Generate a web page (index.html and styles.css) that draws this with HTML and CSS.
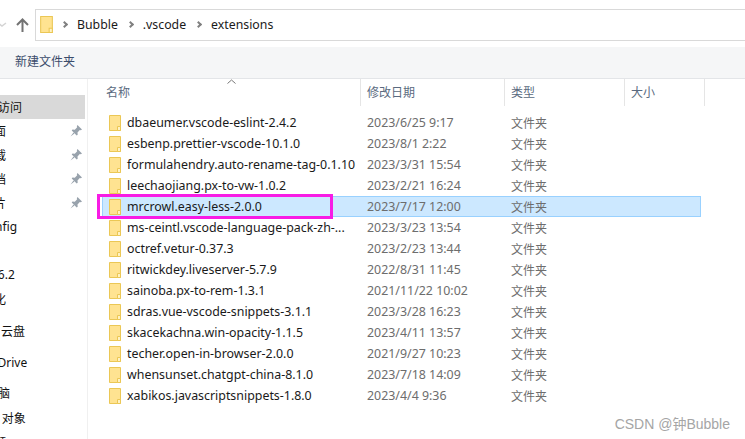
FILE: index.html
```html
<!DOCTYPE html>
<html>
<head>
  <meta charset="utf-8">
  <title>extensions</title>
  <link rel="stylesheet" href="styles.css">
</head>

<body>
  <svg class="svg-defs" width="0" height="0">
    <symbol id="folder" viewBox="0 0 12 16">
      <path d="M.5.5h11v15H.5z" fill="#ffe391" stroke="#ebc755"/>
      <path d="M8.5 15.5v-4h3v4z" fill="#fff2c4" stroke="#ebc755"/>
    </symbol>
    <symbol id="pin" viewBox="0 0 12 12">
      <path d="M7.5 0 12 4.500 10.800 5.300 9.800 5 7.500 7.500 7.700 9.700 6.700 10.500 1.700 5.500 2.500 4.500 4.800 4.700 7.200 2.300 6.800 1.200z" fill="#98a2ac"/>
      <path d="M3.500 7.500.5 11.500 4.500 8.500z" fill="#98a2ac"/>
    </symbol>
  </svg>

  <!-- address bar -->
  <div class="addr-row">
    <div class="nav-btns">
      <svg class="chev-down" width="10" height="6" viewBox="0 0 10 6"><path d="M1 1l4 3 4-3" fill="none" stroke="#d4d4d4" stroke-width="1.500"/></svg>
      <svg class="up-arrow" width="13" height="14" viewBox="0 0 13 14"><path d="M6.500 14V2M1 7l5.500-5.500L12 7" fill="none" stroke="#737373" stroke-width="2"/></svg>
    </div>
    <div class="addr-box">
      <svg class="addr-folder"><use href="#folder"/></svg>
      <span class="crumb-sep"></span><span class="crumb">Bubble</span>
      <span class="crumb-sep"></span><span class="crumb">.vscode</span>
      <span class="crumb-sep"></span><span class="crumb">extensions</span>
    </div>
  </div>

  <div class="toolbar">新建文件夹</div>

  <div class="main">
    <div class="sidebar">
      <div class="nav-item selected"><span class="nav-label clip-top">访问</span></div>
      <div class="nav-item"><span class="nav-label clip-a">桌面</span><svg class="pin"><use href="#pin"/></svg></div>
      <div class="nav-item"><span class="nav-label clip-a">下载</span><svg class="pin"><use href="#pin"/></svg></div>
      <div class="nav-item"><span class="nav-label clip-a">文档</span><svg class="pin"><use href="#pin"/></svg></div>
      <div class="nav-item"><span class="nav-label clip-a">图片</span><svg class="pin"><use href="#pin"/></svg></div>
      <div class="nav-item"><span class="nav-label clip-a">config</span></div>
      <div class="nav-item"></div>
      <div class="nav-item"><span class="nav-label clip-c">16.2</span></div>
      <div class="nav-item"><span class="nav-label clip-a">优化</span></div>
      <div class="nav-item group-start"><span class="nav-label cloud">云盘</span></div>
      <div class="nav-item group-start"><span class="nav-label clip-d">OneDrive</span></div>
      <div class="nav-item gap-small"><span class="nav-label clip-f">电脑</span></div>
      <div class="nav-item gap-tiny"><span class="nav-label clip-e">3D 对象</span></div>
      <div class="nav-item"><span class="nav-label clip-a">视频</span></div>
    </div>

    <div class="content">
      <div class="sort-caret">
        <svg width="9" height="5" viewBox="0 0 9 5"><path d="M.5 4.500l4-3.500 4 3.500" fill="none" stroke="#777" /></svg>
      </div>
      <div class="col-header">
        <div class="col col-name">名称</div>
        <div class="col col-date">修改日期</div>
        <div class="col col-type">类型</div>
        <div class="col col-size">大小</div>
      </div>

      <div class="file-list">
        <div class="file-row"><div class="col-name"><svg class="folder"><use href="#folder"/></svg>dbaeumer.vscode-eslint-2.4.2</div><div class="col-date">2023/6/25 9:17</div><div class="col-type">文件夹</div></div>
        <div class="file-row"><div class="col-name"><svg class="folder"><use href="#folder"/></svg>esbenp.prettier-vscode-10.1.0</div><div class="col-date">2023/8/1 2:22</div><div class="col-type">文件夹</div></div>
        <div class="file-row"><div class="col-name"><svg class="folder"><use href="#folder"/></svg>formulahendry.auto-rename-tag-0.1.10</div><div class="col-date">2023/3/31 15:54</div><div class="col-type">文件夹</div></div>
        <div class="file-row"><div class="col-name"><svg class="folder"><use href="#folder"/></svg>leechaojiang.px-to-vw-1.0.2</div><div class="col-date">2023/2/21 16:24</div><div class="col-type">文件夹</div></div>
        <div class="file-row selected"><div class="col-name"><svg class="folder"><use href="#folder"/></svg>mrcrowl.easy-less-2.0.0</div><div class="col-date">2023/7/17 12:00</div><div class="col-type">文件夹</div><div class="highlight-box"></div></div>
        <div class="file-row"><div class="col-name"><svg class="folder"><use href="#folder"/></svg>ms-ceintl.vscode-language-pack-zh-...</div><div class="col-date">2023/3/23 13:54</div><div class="col-type">文件夹</div></div>
        <div class="file-row"><div class="col-name"><svg class="folder"><use href="#folder"/></svg>octref.vetur-0.37.3</div><div class="col-date">2023/2/23 13:44</div><div class="col-type">文件夹</div></div>
        <div class="file-row"><div class="col-name"><svg class="folder"><use href="#folder"/></svg>ritwickdey.liveserver-5.7.9</div><div class="col-date">2022/8/31 11:45</div><div class="col-type">文件夹</div></div>
        <div class="file-row"><div class="col-name"><svg class="folder"><use href="#folder"/></svg>sainoba.px-to-rem-1.3.1</div><div class="col-date">2021/11/22 10:02</div><div class="col-type">文件夹</div></div>
        <div class="file-row"><div class="col-name"><svg class="folder"><use href="#folder"/></svg>sdras.vue-vscode-snippets-3.1.1</div><div class="col-date">2023/3/28 16:23</div><div class="col-type">文件夹</div></div>
        <div class="file-row"><div class="col-name"><svg class="folder"><use href="#folder"/></svg>skacekachna.win-opacity-1.1.5</div><div class="col-date">2023/4/11 13:57</div><div class="col-type">文件夹</div></div>
        <div class="file-row"><div class="col-name"><svg class="folder"><use href="#folder"/></svg>techer.open-in-browser-2.0.0</div><div class="col-date">2021/9/27 10:23</div><div class="col-type">文件夹</div></div>
        <div class="file-row"><div class="col-name"><svg class="folder"><use href="#folder"/></svg>whensunset.chatgpt-china-8.1.0</div><div class="col-date">2023/7/18 14:09</div><div class="col-type">文件夹</div></div>
        <div class="file-row"><div class="col-name"><svg class="folder"><use href="#folder"/></svg>xabikos.javascriptsnippets-1.8.0</div><div class="col-date">2023/4/4 9:36</div><div class="col-type">文件夹</div></div>
      </div>
      <div class="watermark">CSDN @钟Bubble</div>
    </div>
  </div>
</body>
</html>
```

FILE: styles.css
```css
html, body {
  margin: 0;
  padding: 0;
}

body {
  width: 745px;
  height: 439px;
  overflow: hidden;
  background-color: white;
  font-family: "Noto Sans", "Noto Sans CJK SC", sans-serif;
  font-size: 12.400px;
  color: #1a1a1a;
}

.svg-defs {
  display: block;
  height: 0;
}

.addr-row {
  display: flex;
  height: 47px;
  padding-top: 9px;
  box-sizing: border-box;
}

.nav-btns {
  width: 35px;
  display: flex;
  align-items: center;
  height: 32px;
}

.chev-down {
  margin-left: -3px;
  margin-right: 9px;
}

.addr-box {
  flex: 1;
  height: 32px;
  box-sizing: border-box;
  border: 1px solid #d9d9d9;
  border-right: none;
  display: flex;
  align-items: center;
  padding-left: 4px;
  padding-bottom: 2px;
  font-size: 12.300px;
}

.addr-folder {
  width: 13px;
  height: 17px;
  margin-right: 9px;
}

.crumb-sep {
  width: 5px;
  height: 5px;
  border-top: 2px solid #808080;
  border-right: 2px solid #808080;
  box-sizing: border-box;
  transform: rotate(45deg);
  margin-right: 10px;
}

.crumb {
  margin-right: 10px;
}

.toolbar {
  height: 31px;
  background-color: #f5f6f7;
  border-bottom: 1px solid #e3e5e8;
  line-height: 30px;
  padding-left: 15px;
  font-size: 12px;
  color: #3b4c6b;
}

.main {
  display: flex;
  height: 360px;
}

.sidebar {
  width: 87px;
  flex-shrink: 0;
  border-right: 1px solid #f0f0f0;
  padding-top: 16px;
  overflow: hidden;
}

.nav-item {
  height: 24px;
  width: 85px;
  box-sizing: border-box;
  padding-bottom: 1px;
  display: flex;
  align-items: center;
  justify-content: space-between;
  color: #111;
  font-size: 12px;
  white-space: nowrap;
}

.nav-item.selected {
  background-color: #d9d9d9;
}

.group-start {
  margin-top: 8px;
}

.gap-small {
  margin-top: 6px;
}

.gap-tiny {
  margin-top: 1px;
}

/* names run off the left edge of the shot */
.clip-top { margin-left: -2px; }
.clip-a { margin-left: -18px; }
.clip-c { margin-left: -9px; }
.clip-d { margin-left: -26px; }
.clip-e { margin-left: -17px; }
.clip-f { margin-left: -14px; }
.cloud { margin-left: 1px; }

.pin {
  width: 12px;
  height: 12px;
  margin-right: 3px;
}

.content {
  flex: 1;
  position: relative;
  padding-left: 14px;
}

.sort-caret {
  position: absolute;
  left: 139px;
  top: 0;
  line-height: 0;
}

.col-header {
  display: flex;
  height: 27px;
  line-height: 27px;
  font-size: 12px;
}

.col-header .col {
  border-right: 1px solid #e5e5e5;
  color: #5a6a80;
}

.col-name {
  width: 258px;
  padding-left: 4px;
  box-sizing: border-box;
  flex-shrink: 0;
  white-space: nowrap;
}

.col-date {
  width: 144px;
  padding-left: 7px;
  box-sizing: border-box;
  flex-shrink: 0;
}

.col-type {
  width: 120px;
  padding-left: 7px;
  box-sizing: border-box;
  flex-shrink: 0;
}

.col-size {
  width: 80px;
  padding-left: 6px;
  box-sizing: border-box;
  flex-shrink: 0;
}

.col-header .col-name {
  width: 259px;
}

.col-header .col-date,
.col-header .col-type {
  padding-left: 6px;
}

.file-list {
  margin-top: 6px;
  width: 599px;
}

.file-row {
  height: 21px;
  display: flex;
  align-items: center;
  position: relative;
  box-sizing: border-box;
}

.file-row.selected {
  background-color: #cce8ff;
  outline: 1px solid #99d1ff;
  outline-offset: -1px;
}

.file-row .col-name {
  display: flex;
  align-items: center;
  padding-left: 7px;
}

.file-row .col-date,
.file-row .col-type {
  color: #6d6d6d;
}

.file-row .col-type {
  font-size: 12px;
}

.folder {
  width: 12px;
  height: 16px;
  margin-right: 6px;
  flex-shrink: 0;
}

.highlight-box {
  position: absolute;
  left: -5px;
  top: -2px;
  width: 236px;
  height: 25px;
  box-sizing: border-box;
  border: 3px solid #f81ce5;
}

.watermark {
  position: absolute;
  right: 15px;
  bottom: 6px;
  color: #a5a5a5;
  font-family: "Liberation Sans", "Noto Sans CJK SC", sans-serif;
  font-size: 14px;
}
```
